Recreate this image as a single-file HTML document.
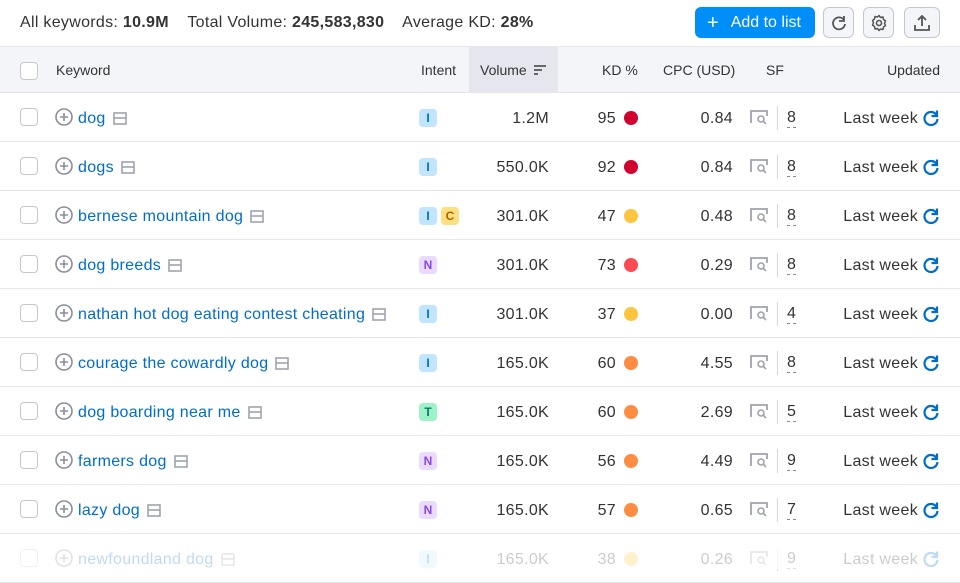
<!DOCTYPE html>
<html><head><meta charset="utf-8"><style>
*{box-sizing:border-box;margin:0;padding:0}
body{width:960px;height:570px;overflow:hidden;background:#fff;font-family:"Liberation Sans",sans-serif;color:#333;position:relative}
.top{position:absolute;left:0;top:0;width:960px;height:46px}
.stats{position:absolute;left:20px;top:14px;font-size:16px;color:#333;white-space:nowrap;letter-spacing:0.3px}
.stats b{font-weight:700;margin-right:14px}
.btn{position:absolute;top:7px;height:31px;border-radius:6px}
.add{left:695px;width:120px;background:#008ff8;color:#fff;font-size:16px;line-height:31px;padding-left:12px}
.ic{width:31px;border:1px solid #c4c7cf;background:#f4f5f9}
.ic svg{position:absolute;left:6px;top:6px}
.thead{position:absolute;left:0;top:46px;width:960px;height:47px;background:#f4f5f9;border-top:1px solid #e6e7ee;border-bottom:1px solid #e0e1e9;font-size:14px;color:#333}
.thead span{position:absolute;top:15px}
.vol{position:absolute;left:469px;top:0;width:89px;height:46px;background:#e6e7ee}
.cb{position:absolute;left:20px;width:18px;height:18px;border:1px solid #c4c7cf;border-radius:4px;background:#fff}
.row{position:absolute;left:0;width:960px;height:49px;border-bottom:1px solid #e6e7ee;font-size:16px}
.row .cb{top:15px}
.row>span{position:absolute;top:16px;line-height:20px;white-space:nowrap;letter-spacing:0.3px}
.plus{position:absolute;left:55px;top:15px}
.kw{left:78px;color:#006dca}
.kw svg{vertical-align:-2px;margin-left:7px}
.bd{position:absolute;top:16px;width:18px;height:18px;border-radius:4px;font-size:12px;font-weight:700;text-align:center;line-height:18px}
.I{background:#c2e5ff;color:#006dca}.C{background:#fce081;color:#b36200}.N{background:#eadbfe;color:#8649e1}.T{background:#9ef2c9;color:#007c65}
.r{text-align:right}
.v{right:411px}.kd{right:344px}.cpc{right:227px}
.dot{position:absolute;left:624px;top:18px;width:14px;height:14px;border-radius:50%}
.sfi{position:absolute;left:750px;top:16px}
.sep{position:absolute;left:777px;top:13px;width:1px;height:24px;background:#d5d7de}
.row>span.sfn{left:787px;border-bottom:1px dashed #888;line-height:18px;top:16px}
.lw{right:42px}
.rf{position:absolute;left:922px;top:16px}
.fade{position:absolute;left:0;top:535px;width:960px;height:35px;background:rgba(255,255,255,0.75)}
</style></head><body>
<div class="top">
<div class="stats">All keywords: <b>10.9M</b> Total Volume: <b>245,583,830</b> Average KD: <b>28%</b></div>
<div class="btn add"><span style="font-size:20px;vertical-align:-2px;margin-right:12px">+</span>Add to list</div>
<div class="btn ic" style="left:823px"><svg width="18" height="18" viewBox="0 0 18 18"><path d="M14 6A6 6 0 1 0 15 10" fill="none" stroke="#555" stroke-width="1.8"/><path d="M14 2v5h-5" fill="none" stroke="#555" stroke-width="1.8"/></svg></div>
<div class="btn ic" style="left:863px"><svg width="18" height="18" viewBox="0 0 18 18"><circle cx="9" cy="9" r="2.5" fill="none" stroke="#555" stroke-width="1.6"/><path d="M9 1.5l1.5 2 2.5-.5.5 2.5 2 1.5-1 2.3 1 2.2-2 1.5-.5 2.5-2.5-.5L9 16.5l-1.5-2-2.5.5-.5-2.5-2-1.5 1-2.2-1-2.3 2-1.5.5-2.5 2.5.5z" fill="none" stroke="#555" stroke-width="1.5" stroke-linejoin="round"/></svg></div>
<div class="btn ic" style="left:904px;width:36px"><svg width="20" height="18" viewBox="0 0 20 18" style="left:7px"><path d="M10 12V2M6 6l4-4 4 4M3 11v5h14v-5" fill="none" stroke="#555" stroke-width="1.8"/></svg></div>
</div>
<div class="thead"><div class="vol"></div>
<div class="cb" style="top:15px"></div>
<span style="left:56px">Keyword</span><span style="left:421px">Intent</span>
<span style="left:480px">Volume</span>
<svg style="position:absolute;left:533px;top:17px" width="14" height="12"><path d="M1 2h12M1 6h8M1 10h4" stroke="#555" stroke-width="1.8"/></svg>
<span style="left:602px">KD %</span><span style="left:663px">CPC (USD)</span><span style="left:766px">SF</span><span style="right:20px">Updated</span>
</div>

<div class="row" style="top:93px"><div class="cb"></div><svg class="plus" width="18" height="18"><circle cx="9" cy="9" r="8" fill="none" stroke="#8a8e9b" stroke-width="1.6"/><path d="M9 5v8M5 9h8" stroke="#8a8e9b" stroke-width="1.6"/></svg><span class="kw">dog<svg width="14" height="13"><rect x="1" y="1" width="12" height="11" fill="none" stroke="#a0a3ad" stroke-width="1.6"/><path d="M1 6h12" stroke="#a0a3ad" stroke-width="1.6"/></svg></span><div class="bd I" style="left:419px">I</div><span class="v r">1.2M</span><span class="kd r">95</span><div class="dot" style="background:#d1002f"></div><span class="cpc r">0.84</span><svg class="sfi" width="18" height="16"><path d="M1 14V2h16v5" fill="none" stroke="#a0a3ad" stroke-width="1.8"/><circle cx="11" cy="10" r="3" fill="none" stroke="#a0a3ad" stroke-width="1.6"/><path d="M13 12l3 3" stroke="#a0a3ad" stroke-width="1.6"/></svg><div class="sep"></div><span class="sfn">8</span><span class="lw">Last week</span><svg class="rf" width="18" height="18" viewBox="0 0 18 18"><path d="M14.5 6A6.5 6.5 0 1 0 15.5 10" fill="none" stroke="#006dca" stroke-width="2.2"/><path d="M15 1.5v5.5h-5.5" fill="none" stroke="#006dca" stroke-width="2.2"/></svg></div>

<div class="row" style="top:142px"><div class="cb"></div><svg class="plus" width="18" height="18"><circle cx="9" cy="9" r="8" fill="none" stroke="#8a8e9b" stroke-width="1.6"/><path d="M9 5v8M5 9h8" stroke="#8a8e9b" stroke-width="1.6"/></svg><span class="kw">dogs<svg width="14" height="13"><rect x="1" y="1" width="12" height="11" fill="none" stroke="#a0a3ad" stroke-width="1.6"/><path d="M1 6h12" stroke="#a0a3ad" stroke-width="1.6"/></svg></span><div class="bd I" style="left:419px">I</div><span class="v r">550.0K</span><span class="kd r">92</span><div class="dot" style="background:#d1002f"></div><span class="cpc r">0.84</span><svg class="sfi" width="18" height="16"><path d="M1 14V2h16v5" fill="none" stroke="#a0a3ad" stroke-width="1.8"/><circle cx="11" cy="10" r="3" fill="none" stroke="#a0a3ad" stroke-width="1.6"/><path d="M13 12l3 3" stroke="#a0a3ad" stroke-width="1.6"/></svg><div class="sep"></div><span class="sfn">8</span><span class="lw">Last week</span><svg class="rf" width="18" height="18" viewBox="0 0 18 18"><path d="M14.5 6A6.5 6.5 0 1 0 15.5 10" fill="none" stroke="#006dca" stroke-width="2.2"/><path d="M15 1.5v5.5h-5.5" fill="none" stroke="#006dca" stroke-width="2.2"/></svg></div>

<div class="row" style="top:191px"><div class="cb"></div><svg class="plus" width="18" height="18"><circle cx="9" cy="9" r="8" fill="none" stroke="#8a8e9b" stroke-width="1.6"/><path d="M9 5v8M5 9h8" stroke="#8a8e9b" stroke-width="1.6"/></svg><span class="kw">bernese mountain dog<svg width="14" height="13"><rect x="1" y="1" width="12" height="11" fill="none" stroke="#a0a3ad" stroke-width="1.6"/><path d="M1 6h12" stroke="#a0a3ad" stroke-width="1.6"/></svg></span><div class="bd I" style="left:419px">I</div><div class="bd C" style="left:441px">C</div><span class="v r">301.0K</span><span class="kd r">47</span><div class="dot" style="background:#ffc53d"></div><span class="cpc r">0.48</span><svg class="sfi" width="18" height="16"><path d="M1 14V2h16v5" fill="none" stroke="#a0a3ad" stroke-width="1.8"/><circle cx="11" cy="10" r="3" fill="none" stroke="#a0a3ad" stroke-width="1.6"/><path d="M13 12l3 3" stroke="#a0a3ad" stroke-width="1.6"/></svg><div class="sep"></div><span class="sfn">8</span><span class="lw">Last week</span><svg class="rf" width="18" height="18" viewBox="0 0 18 18"><path d="M14.5 6A6.5 6.5 0 1 0 15.5 10" fill="none" stroke="#006dca" stroke-width="2.2"/><path d="M15 1.5v5.5h-5.5" fill="none" stroke="#006dca" stroke-width="2.2"/></svg></div>

<div class="row" style="top:240px"><div class="cb"></div><svg class="plus" width="18" height="18"><circle cx="9" cy="9" r="8" fill="none" stroke="#8a8e9b" stroke-width="1.6"/><path d="M9 5v8M5 9h8" stroke="#8a8e9b" stroke-width="1.6"/></svg><span class="kw">dog breeds<svg width="14" height="13"><rect x="1" y="1" width="12" height="11" fill="none" stroke="#a0a3ad" stroke-width="1.6"/><path d="M1 6h12" stroke="#a0a3ad" stroke-width="1.6"/></svg></span><div class="bd N" style="left:419px">N</div><span class="v r">301.0K</span><span class="kd r">73</span><div class="dot" style="background:#ff4953"></div><span class="cpc r">0.29</span><svg class="sfi" width="18" height="16"><path d="M1 14V2h16v5" fill="none" stroke="#a0a3ad" stroke-width="1.8"/><circle cx="11" cy="10" r="3" fill="none" stroke="#a0a3ad" stroke-width="1.6"/><path d="M13 12l3 3" stroke="#a0a3ad" stroke-width="1.6"/></svg><div class="sep"></div><span class="sfn">8</span><span class="lw">Last week</span><svg class="rf" width="18" height="18" viewBox="0 0 18 18"><path d="M14.5 6A6.5 6.5 0 1 0 15.5 10" fill="none" stroke="#006dca" stroke-width="2.2"/><path d="M15 1.5v5.5h-5.5" fill="none" stroke="#006dca" stroke-width="2.2"/></svg></div>

<div class="row" style="top:289px"><div class="cb"></div><svg class="plus" width="18" height="18"><circle cx="9" cy="9" r="8" fill="none" stroke="#8a8e9b" stroke-width="1.6"/><path d="M9 5v8M5 9h8" stroke="#8a8e9b" stroke-width="1.6"/></svg><span class="kw">nathan hot dog eating contest cheating<svg width="14" height="13"><rect x="1" y="1" width="12" height="11" fill="none" stroke="#a0a3ad" stroke-width="1.6"/><path d="M1 6h12" stroke="#a0a3ad" stroke-width="1.6"/></svg></span><div class="bd I" style="left:419px">I</div><span class="v r">301.0K</span><span class="kd r">37</span><div class="dot" style="background:#ffc53d"></div><span class="cpc r">0.00</span><svg class="sfi" width="18" height="16"><path d="M1 14V2h16v5" fill="none" stroke="#a0a3ad" stroke-width="1.8"/><circle cx="11" cy="10" r="3" fill="none" stroke="#a0a3ad" stroke-width="1.6"/><path d="M13 12l3 3" stroke="#a0a3ad" stroke-width="1.6"/></svg><div class="sep"></div><span class="sfn">4</span><span class="lw">Last week</span><svg class="rf" width="18" height="18" viewBox="0 0 18 18"><path d="M14.5 6A6.5 6.5 0 1 0 15.5 10" fill="none" stroke="#006dca" stroke-width="2.2"/><path d="M15 1.5v5.5h-5.5" fill="none" stroke="#006dca" stroke-width="2.2"/></svg></div>

<div class="row" style="top:338px"><div class="cb"></div><svg class="plus" width="18" height="18"><circle cx="9" cy="9" r="8" fill="none" stroke="#8a8e9b" stroke-width="1.6"/><path d="M9 5v8M5 9h8" stroke="#8a8e9b" stroke-width="1.6"/></svg><span class="kw">courage the cowardly dog<svg width="14" height="13"><rect x="1" y="1" width="12" height="11" fill="none" stroke="#a0a3ad" stroke-width="1.6"/><path d="M1 6h12" stroke="#a0a3ad" stroke-width="1.6"/></svg></span><div class="bd I" style="left:419px">I</div><span class="v r">165.0K</span><span class="kd r">60</span><div class="dot" style="background:#ff8c43"></div><span class="cpc r">4.55</span><svg class="sfi" width="18" height="16"><path d="M1 14V2h16v5" fill="none" stroke="#a0a3ad" stroke-width="1.8"/><circle cx="11" cy="10" r="3" fill="none" stroke="#a0a3ad" stroke-width="1.6"/><path d="M13 12l3 3" stroke="#a0a3ad" stroke-width="1.6"/></svg><div class="sep"></div><span class="sfn">8</span><span class="lw">Last week</span><svg class="rf" width="18" height="18" viewBox="0 0 18 18"><path d="M14.5 6A6.5 6.5 0 1 0 15.5 10" fill="none" stroke="#006dca" stroke-width="2.2"/><path d="M15 1.5v5.5h-5.5" fill="none" stroke="#006dca" stroke-width="2.2"/></svg></div>

<div class="row" style="top:387px"><div class="cb"></div><svg class="plus" width="18" height="18"><circle cx="9" cy="9" r="8" fill="none" stroke="#8a8e9b" stroke-width="1.6"/><path d="M9 5v8M5 9h8" stroke="#8a8e9b" stroke-width="1.6"/></svg><span class="kw">dog boarding near me<svg width="14" height="13"><rect x="1" y="1" width="12" height="11" fill="none" stroke="#a0a3ad" stroke-width="1.6"/><path d="M1 6h12" stroke="#a0a3ad" stroke-width="1.6"/></svg></span><div class="bd T" style="left:419px">T</div><span class="v r">165.0K</span><span class="kd r">60</span><div class="dot" style="background:#ff8c43"></div><span class="cpc r">2.69</span><svg class="sfi" width="18" height="16"><path d="M1 14V2h16v5" fill="none" stroke="#a0a3ad" stroke-width="1.8"/><circle cx="11" cy="10" r="3" fill="none" stroke="#a0a3ad" stroke-width="1.6"/><path d="M13 12l3 3" stroke="#a0a3ad" stroke-width="1.6"/></svg><div class="sep"></div><span class="sfn">5</span><span class="lw">Last week</span><svg class="rf" width="18" height="18" viewBox="0 0 18 18"><path d="M14.5 6A6.5 6.5 0 1 0 15.5 10" fill="none" stroke="#006dca" stroke-width="2.2"/><path d="M15 1.5v5.5h-5.5" fill="none" stroke="#006dca" stroke-width="2.2"/></svg></div>

<div class="row" style="top:436px"><div class="cb"></div><svg class="plus" width="18" height="18"><circle cx="9" cy="9" r="8" fill="none" stroke="#8a8e9b" stroke-width="1.6"/><path d="M9 5v8M5 9h8" stroke="#8a8e9b" stroke-width="1.6"/></svg><span class="kw">farmers dog<svg width="14" height="13"><rect x="1" y="1" width="12" height="11" fill="none" stroke="#a0a3ad" stroke-width="1.6"/><path d="M1 6h12" stroke="#a0a3ad" stroke-width="1.6"/></svg></span><div class="bd N" style="left:419px">N</div><span class="v r">165.0K</span><span class="kd r">56</span><div class="dot" style="background:#ff8c43"></div><span class="cpc r">4.49</span><svg class="sfi" width="18" height="16"><path d="M1 14V2h16v5" fill="none" stroke="#a0a3ad" stroke-width="1.8"/><circle cx="11" cy="10" r="3" fill="none" stroke="#a0a3ad" stroke-width="1.6"/><path d="M13 12l3 3" stroke="#a0a3ad" stroke-width="1.6"/></svg><div class="sep"></div><span class="sfn">9</span><span class="lw">Last week</span><svg class="rf" width="18" height="18" viewBox="0 0 18 18"><path d="M14.5 6A6.5 6.5 0 1 0 15.5 10" fill="none" stroke="#006dca" stroke-width="2.2"/><path d="M15 1.5v5.5h-5.5" fill="none" stroke="#006dca" stroke-width="2.2"/></svg></div>

<div class="row" style="top:485px"><div class="cb"></div><svg class="plus" width="18" height="18"><circle cx="9" cy="9" r="8" fill="none" stroke="#8a8e9b" stroke-width="1.6"/><path d="M9 5v8M5 9h8" stroke="#8a8e9b" stroke-width="1.6"/></svg><span class="kw">lazy dog<svg width="14" height="13"><rect x="1" y="1" width="12" height="11" fill="none" stroke="#a0a3ad" stroke-width="1.6"/><path d="M1 6h12" stroke="#a0a3ad" stroke-width="1.6"/></svg></span><div class="bd N" style="left:419px">N</div><span class="v r">165.0K</span><span class="kd r">57</span><div class="dot" style="background:#ff8c43"></div><span class="cpc r">0.65</span><svg class="sfi" width="18" height="16"><path d="M1 14V2h16v5" fill="none" stroke="#a0a3ad" stroke-width="1.8"/><circle cx="11" cy="10" r="3" fill="none" stroke="#a0a3ad" stroke-width="1.6"/><path d="M13 12l3 3" stroke="#a0a3ad" stroke-width="1.6"/></svg><div class="sep"></div><span class="sfn">7</span><span class="lw">Last week</span><svg class="rf" width="18" height="18" viewBox="0 0 18 18"><path d="M14.5 6A6.5 6.5 0 1 0 15.5 10" fill="none" stroke="#006dca" stroke-width="2.2"/><path d="M15 1.5v5.5h-5.5" fill="none" stroke="#006dca" stroke-width="2.2"/></svg></div>

<div class="row" style="top:534px"><div class="cb"></div><svg class="plus" width="18" height="18"><circle cx="9" cy="9" r="8" fill="none" stroke="#8a8e9b" stroke-width="1.6"/><path d="M9 5v8M5 9h8" stroke="#8a8e9b" stroke-width="1.6"/></svg><span class="kw">newfoundland dog<svg width="14" height="13"><rect x="1" y="1" width="12" height="11" fill="none" stroke="#a0a3ad" stroke-width="1.6"/><path d="M1 6h12" stroke="#a0a3ad" stroke-width="1.6"/></svg></span><div class="bd I" style="left:419px">I</div><span class="v r">165.0K</span><span class="kd r">38</span><div class="dot" style="background:#ffc53d"></div><span class="cpc r">0.26</span><svg class="sfi" width="18" height="16"><path d="M1 14V2h16v5" fill="none" stroke="#a0a3ad" stroke-width="1.8"/><circle cx="11" cy="10" r="3" fill="none" stroke="#a0a3ad" stroke-width="1.6"/><path d="M13 12l3 3" stroke="#a0a3ad" stroke-width="1.6"/></svg><div class="sep"></div><span class="sfn">9</span><span class="lw">Last week</span><svg class="rf" width="18" height="18" viewBox="0 0 18 18"><path d="M14.5 6A6.5 6.5 0 1 0 15.5 10" fill="none" stroke="#006dca" stroke-width="2.2"/><path d="M15 1.5v5.5h-5.5" fill="none" stroke="#006dca" stroke-width="2.2"/></svg></div>
<div class="fade"></div>
</body></html>
